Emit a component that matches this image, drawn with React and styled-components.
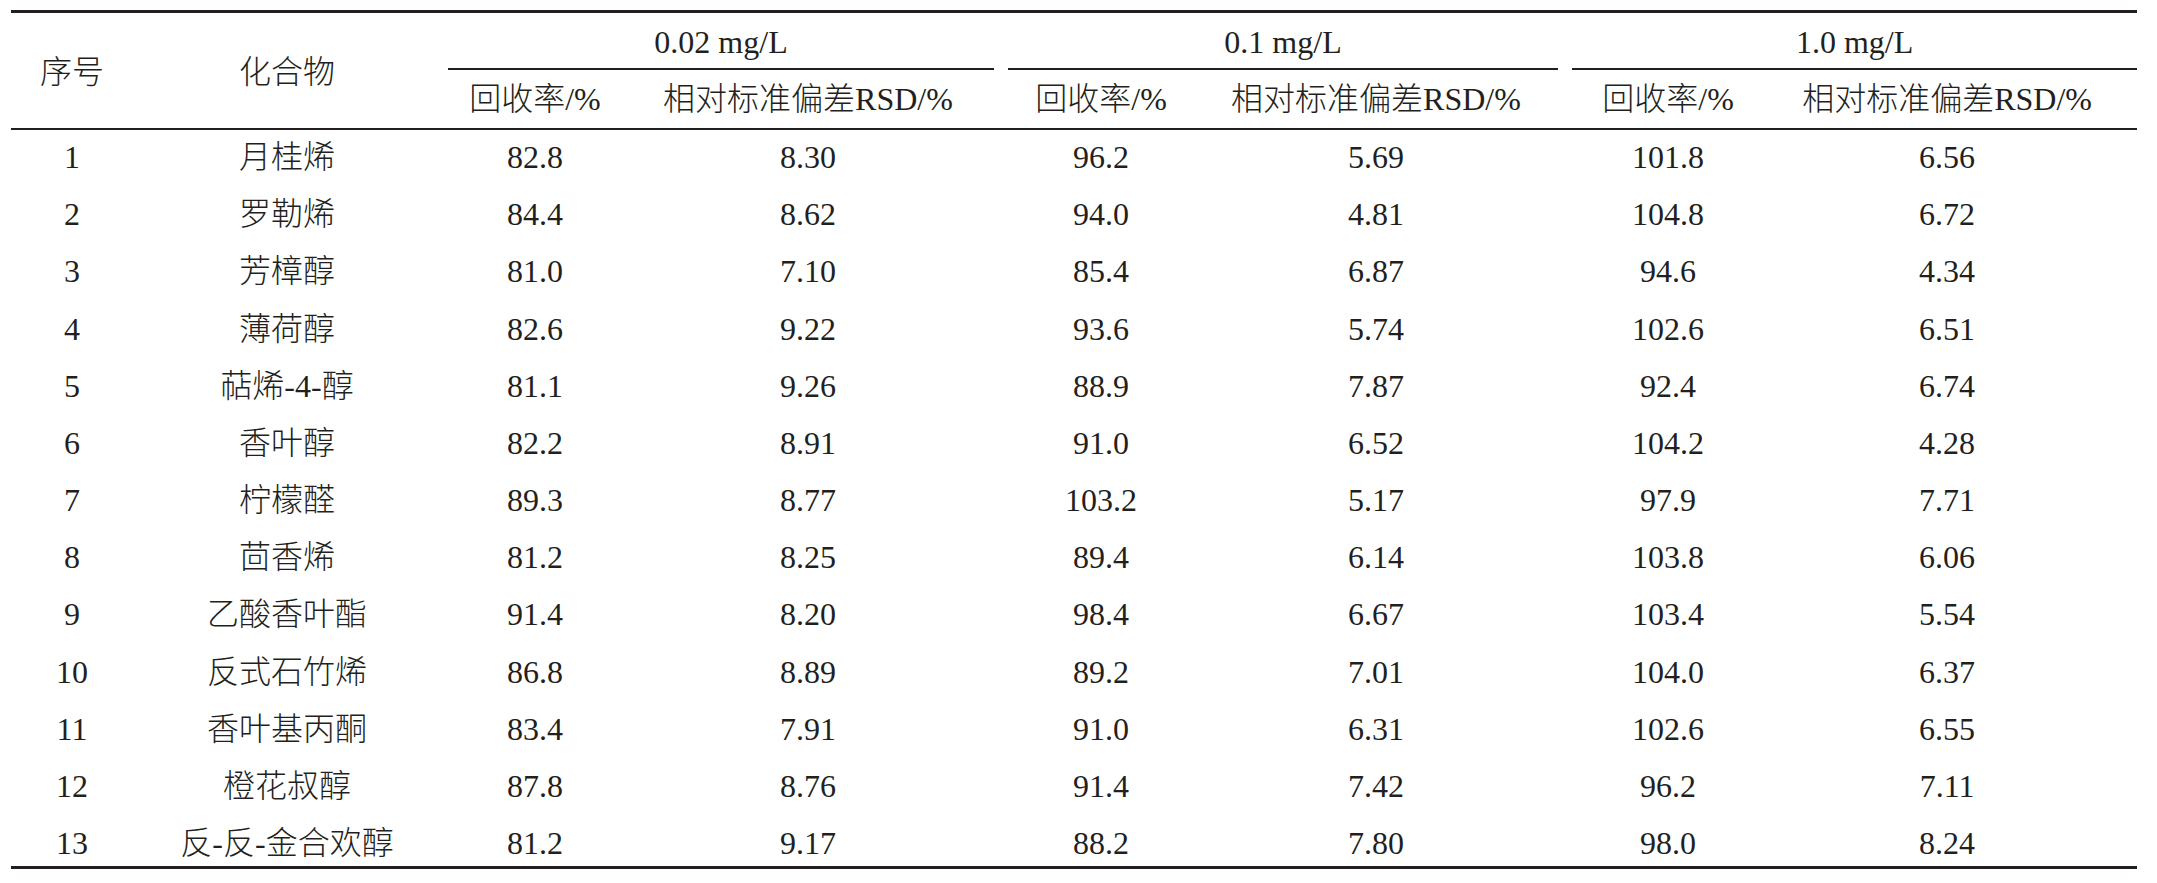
import React from 'react';
import styled, { createGlobalStyle } from 'styled-components';

const GlobalStyle = createGlobalStyle`
  body {
    margin: 0;
    background: #fff;
  }
`;

const ink = '#231f20';

const Page = styled.div`
  padding: 10px 0 0 11px;
`;

// top and bottom rules of the three-line table
const Frame = styled.div`
  width: 2126px;
  border-top: 3px solid ${ink};
  border-bottom: 3px solid ${ink};
`;

const Table = styled.table`
  width: 100%;
  table-layout: fixed;
  border-collapse: separate;
  border-spacing: 0;
  font-family: "Liberation Serif", "Noto Sans CJK SC", serif;
  font-size: 32px;
  font-weight: 300;
  color: ${ink};
`;

const Col = styled.col`
  width: ${(p) => p.$w}px;
`;

const HeadCell = styled.th`
  font-weight: 300;
  padding: 0;
  text-align: center;
  white-space: nowrap;
`;

const StubHead = styled(HeadCell)`
  vertical-align: middle;
  padding-bottom: 4px;
  border-bottom: 2px solid ${ink};
`;

const GroupHead = styled(HeadCell)`
  vertical-align: bottom;
  padding: ${(p) => (p.$last ? '0 0 0 7px' : '0 7px')};
`;

const GroupLabel = styled.div`
  padding-top: 4px;
  line-height: 51px;
  border-bottom: 2px solid ${ink};
`;

const SubHead = styled(HeadCell)`
  line-height: 58px;
  border-bottom: 2px solid ${ink};
  padding-right: ${(p) => (p.$wide ? '14px' : '0')};
`;

const Cell = styled.td`
  padding: 0 ${(p) => (p.$wide ? '14px' : '0')} 3px 0;
  line-height: 54.17px;
  text-align: center;
  white-space: nowrap;

  tr:last-child > & {
    padding-top: 4px;
    padding-bottom: 0;
    line-height: 46px;
  }
`;

const widths = [122, 308, 188, 372, 200, 364, 206, 366];
const groups = ['0.02 mg/L', '0.1 mg/L', '1.0 mg/L'];

const rows = [
  ['1', '月桂烯', '82.8', '8.30', '96.2', '5.69', '101.8', '6.56'],
  ['2', '罗勒烯', '84.4', '8.62', '94.0', '4.81', '104.8', '6.72'],
  ['3', '芳樟醇', '81.0', '7.10', '85.4', '6.87', '94.6', '4.34'],
  ['4', '薄荷醇', '82.6', '9.22', '93.6', '5.74', '102.6', '6.51'],
  ['5', '萜烯-4-醇', '81.1', '9.26', '88.9', '7.87', '92.4', '6.74'],
  ['6', '香叶醇', '82.2', '8.91', '91.0', '6.52', '104.2', '4.28'],
  ['7', '柠檬醛', '89.3', '8.77', '103.2', '5.17', '97.9', '7.71'],
  ['8', '茴香烯', '81.2', '8.25', '89.4', '6.14', '103.8', '6.06'],
  ['9', '乙酸香叶酯', '91.4', '8.20', '98.4', '6.67', '103.4', '5.54'],
  ['10', '反式石竹烯', '86.8', '8.89', '89.2', '7.01', '104.0', '6.37'],
  ['11', '香叶基丙酮', '83.4', '7.91', '91.0', '6.31', '102.6', '6.55'],
  ['12', '橙花叔醇', '87.8', '8.76', '91.4', '7.42', '96.2', '7.11'],
  ['13', '反-反-金合欢醇', '81.2', '9.17', '88.2', '7.80', '98.0', '8.24'],
];

export default function App() {
  return (
    <Page>
      <GlobalStyle />
      <Frame>
        <Table>
          <colgroup>
            {widths.map((w, i) => (
              <Col key={i} $w={w} />
            ))}
          </colgroup>
          <thead>
            <tr>
              <StubHead rowSpan={2}>序号</StubHead>
              <StubHead rowSpan={2}>化合物</StubHead>
              {groups.map((g, i) => (
                <GroupHead key={g} colSpan={2} $last={i === groups.length - 1}>
                  <GroupLabel>{g}</GroupLabel>
                </GroupHead>
              ))}
            </tr>
            <tr>
              {groups.map((g) => (
                <React.Fragment key={g}>
                  <SubHead>回收率/%</SubHead>
                  <SubHead $wide>相对标准偏差RSD/%</SubHead>
                </React.Fragment>
              ))}
            </tr>
          </thead>
          <tbody>
            {rows.map((r) => (
              <tr key={r[0]}>
                {r.map((v, i) => (
                  <Cell key={i} $wide={i > 2 && i % 2 === 1}>
                    {v}
                  </Cell>
                ))}
              </tr>
            ))}
          </tbody>
        </Table>
      </Frame>
    </Page>
  );
}
